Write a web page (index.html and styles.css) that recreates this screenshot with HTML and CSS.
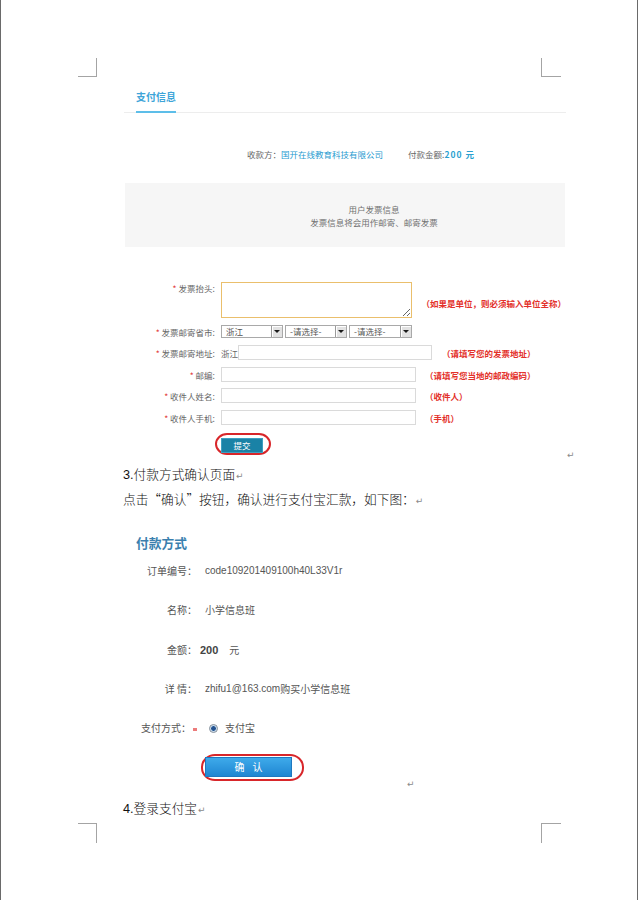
FILE: index.html
```html
<!DOCTYPE html>
<html lang="zh-CN">
<head>
<meta charset="utf-8">
<title>支付信息 - 付款方式</title>
<link rel="stylesheet" href="styles.css">
</head>
<body>
<div class="page">
  <span class="crop tl"></span>
  <span class="crop tr"></span>
  <span class="crop bl"></span>
  <span class="crop br"></span>

  <div class="content">
    <div class="img-para">
      <section class="shot1">
        <div class="tabs"><span class="tab">支付信息</span></div>
        <div class="payee"><span>收款方：</span><span class="company">国开在线教育科技有限公司</span><span class="amount-label">付款金额:</span><span class="amount">200 元</span></div>
        <div class="notice">
          <p>用户发票信息</p>
          <p>发票信息将会用作邮寄、邮寄发票</p>
        </div>
        <form class="invoice">
          <div class="row row-top">
            <label class="lbl"><i class="req">*</i> 发票抬头:</label>
            <textarea class="ta"></textarea>
            <span class="hint hint-top">（如果是单位，则必须输入单位全称）</span>
          </div>
          <div class="row">
            <label class="lbl"><i class="req">*</i> 发票邮寄省市:</label>
            <span class="select"><span class="val">浙江</span><span class="arrow"></span></span>
            <span class="select"><span class="val">-请选择-</span><span class="arrow"></span></span>
            <span class="select wide"><span class="val">-请选择-</span><span class="arrow"></span></span>
          </div>
          <div class="row">
            <label class="lbl"><i class="req">*</i> 发票邮寄地址:</label>
            <span class="prefix">浙江</span><input class="inp addr" type="text">
            <span class="hint hint-addr">（请填写您的发票地址）</span>
          </div>
          <div class="row">
            <label class="lbl"><i class="req">*</i> 邮编:</label>
            <input class="inp" type="text">
            <span class="hint">（请填写您当地的邮政编码）</span>
          </div>
          <div class="row row-tight">
            <label class="lbl"><i class="req">*</i> 收件人姓名:</label>
            <input class="inp" type="text">
            <span class="hint">（收件人）</span>
          </div>
          <div class="row">
            <label class="lbl"><i class="req">*</i> 收件人手机:</label>
            <input class="inp" type="text">
            <span class="hint">（手机）</span>
          </div>
          <div class="row row-submit">
            <span class="oval oval-submit"><button class="btn-submit" type="button">提交</button></span>
          </div>
        </form>
      </section>
      <span class="ret ret-img1">↵</span>
    </div>

    <p class="para"><span class="num">3.</span>付款方式确认页面<span class="ret">↵</span></p>
    <p class="para">点击“确认”按钮，确认进行支付宝汇款，如下图：<span class="ret">↵</span></p>

    <div class="img-para img-para2">
      <section class="shot2">
        <h2 class="pay-title">付款方式</h2>
        <div class="pay-rows">
          <span class="plbl">订单编号：</span><span class="pval latin">code109201409100h40L33V1r</span>
          <span class="plbl">名称：</span><span class="pval">小学信息班</span>
          <span class="plbl">金额：</span><span class="pval"><b class="money">200</b><span class="yuan">元</span></span>
          <span class="plbl">详 情：</span><span class="pval"><span class="latin">zhifu1@163.com</span>购买小学信息班</span>
          <span class="plbl">支付方式：<i class="req-mark"></i></span><span class="pval"><span class="radio"></span><span class="radio-text">支付宝</span></span>
        </div>
        <span class="oval oval-confirm"><button class="btn-confirm" type="button">确 认</button></span>
      </section>
      <span class="ret ret-img2">↵</span>
    </div>

    <p class="para"><span class="num">4.</span>登录支付宝<span class="ret">↵</span></p>
  </div>
</div>
</body>
</html>
```

FILE: styles.css
```css
* {
  box-sizing: border-box;
}

html,
body {
  margin: 0;
  padding: 0;
  background: #fff;
}

body {
  font-family: "Noto Sans CJK SC", "Liberation Sans", sans-serif;
  color: #000;
}

.page {
  position: relative;
  width: 638px;
  height: 900px;
  border-left: 1px solid #6a6a6a;
  border-right: 1px solid #6a6a6a;
  overflow: hidden;
}

/* Word page crop marks */
.crop {
  position: absolute;
  border: 0 solid #a4a4a4;
}

.crop.tl {
  left: 77px;
  top: 58px;
  width: 19px;
  height: 19px;
  border-right-width: 1px;
  border-bottom-width: 1px;
}

.crop.tr {
  left: 540px;
  top: 58px;
  width: 20px;
  height: 19px;
  border-left-width: 1px;
  border-bottom-width: 1px;
}

.crop.bl {
  left: 77px;
  top: 823px;
  width: 19px;
  height: 20px;
  border-right-width: 1px;
  border-top-width: 1px;
}

.crop.br {
  left: 540px;
  top: 823px;
  width: 20px;
  height: 20px;
  border-left-width: 1px;
  border-top-width: 1px;
}

.content {
  padding: 90px 0 0 122px;
}

.img-para {
  display: flex;
  align-items: flex-end;
  margin-bottom: 7px;
}

.img-para2 {
  margin-bottom: 15px;
}

/* ---------- screenshot 1 ---------- */
.shot1 {
  width: 443px;
  font-size: 8.5px;
  color: #666;
}

.tabs {
  display: flex;
  margin-left: 1px;
  border-bottom: 1px solid #ededed;
}

.tab {
  margin-left: 12px;
  font-size: 10px;
  font-weight: bold;
  color: #3ea4d8;
  line-height: 14px;
  padding-bottom: 7px;
  border-bottom: 2px solid #5dbee9;
  margin-bottom: -1px;
}

.payee {
  margin-top: 35px;
  padding-left: 124px;
  line-height: 12px;
  white-space: nowrap;
}

.company {
  color: #1f9bd0;
}

.amount-label {
  margin-left: 25px;
}

.amount {
  color: #2a9fd0;
  font-weight: bold;
  letter-spacing: 1px;
}

.notice {
  margin: 23px 0 0 2px;
  width: 440px;
  height: 64px;
  background: #f6f6f6;
  padding: 20px 0 0 58px;
  text-align: center;
  line-height: 13px;
  color: #707070;
}

.notice p {
  margin: 0;
}

.invoice {
  margin: 35px 0 0;
}

.row {
  display: flex;
  align-items: center;
  margin-top: 7px;
  white-space: nowrap;
}

.row-top {
  margin-top: 0;
  align-items: flex-start;
}

.row-tight {
  margin-top: 6px;
}

.row-submit {
  margin-top: 8px;
}

.lbl {
  width: 92px;
  margin-right: 6px;
  text-align: right;
  line-height: 12px;
  color: #666;
}

.req {
  color: #e23a3a;
  font-style: normal;
}

.ta {
  display: block;
  width: 192px;
  height: 36px;
  margin: 0;
  padding: 0;
  border: 1px solid #eabf6c;
  background: #fff;
  resize: both;
}

.hint {
  margin-left: 9px;
  color: #e3302a;
  font-weight: bold;
  line-height: 12px;
}

.hint-top {
  margin-top: 15px;
}

.hint-addr {
  margin-left: 10px;
}

.select {
  display: flex;
  width: 62px;
  height: 13px;
  margin-right: 2px;
  border: 1px solid #a9a9a9;
  background: #fff;
}

.select.wide {
  width: 63px;
}

.select .val {
  flex: 1;
  padding-left: 4px;
  line-height: 11px;
  color: #555;
}

.select .arrow {
  display: flex;
  align-items: center;
  justify-content: center;
  width: 11px;
  border-left: 1px solid #9a9a9a;
  background: #e2e2e2;
  box-shadow: inset 1px 1px 0 #fff;
}

.select .arrow::after {
  content: "";
  border-left: 3px solid transparent;
  border-right: 3px solid transparent;
  border-top: 3px solid #1a1a1a;
}

.prefix {
  width: 17px;
  line-height: 12px;
  color: #666;
}

.inp {
  display: block;
  width: 195px;
  height: 15px;
  margin: 0;
  padding: 0;
  border: 1px solid #dadada;
  background: #fff;
}

.inp.addr {
  width: 194px;
}

.oval {
  display: flex;
  border: 2px solid #d8262a;
}

.oval-submit {
  margin-left: 92px;
  padding: 3px 6px 0 4px;
  border-radius: 12px / 11px;
}

.btn-submit {
  width: 42px;
  height: 15px;
  margin: 0;
  padding: 0;
  border: 1px solid #3d9fc1;
  background: #1a82a6;
  color: #fff;
  font: 8.5px/13px "Noto Sans CJK SC", sans-serif;
}

/* ---------- Word paragraphs ---------- */
.para {
  margin: 0;
  font-size: 12.7px;
  font-weight: 300;
  line-height: 24px;
  color: #111;
  white-space: nowrap;
}

.num {
  font-family: "Liberation Sans", sans-serif;
  font-weight: 400;
}

.ret {
  font-family: "DejaVu Sans", sans-serif;
  font-size: 9px;
  font-weight: 400;
  line-height: 10px;
  color: #8a8a8a;
  margin-left: 1px;
}

.ret-img1 {
  margin-bottom: -5px;
}

.ret-img2 {
  margin-bottom: -8px;
}

/* ---------- screenshot 2 ---------- */
.shot2 {
  width: 283px;
  padding-top: 22px;
}

.pay-title {
  margin: 0 0 0 13px;
  font-size: 12.75px;
  font-weight: bold;
  line-height: 20px;
  color: #3a7fae;
}

.pay-rows {
  display: grid;
  grid-template-columns: 74px auto;
  column-gap: 8px;
  row-gap: 19.25px;
  grid-auto-rows: 20px;
  margin-top: 8px;
  font-size: 10px;
  line-height: 20px;
  color: #555;
  white-space: pre;
}

.plbl {
  text-align: right;
}

.pval {
  display: flex;
  align-items: center;
}

.latin {
  font-family: "Liberation Sans", sans-serif;
}

.money {
  margin-left: -5px;
  font-family: "Liberation Sans", sans-serif;
  font-size: 11px;
  color: #444;
}

.yuan {
  margin-left: 11px;
}

.req-mark {
  display: inline-block;
  width: 4px;
  height: 3px;
  margin-left: 2px;
  background: #ec7b7b;
  vertical-align: middle;
}

.radio {
  width: 9px;
  height: 9px;
  margin-left: 4px;
  border-radius: 50%;
  border: 1px solid #7f8c99;
  background: radial-gradient(circle, #24528f 0 2px, #9fc0e0 2.5px, #f4f6f8 3.5px);
}

.radio-text {
  margin-left: 7px;
}

.oval-confirm {
  width: fit-content;
  margin: 16px 0 0 78px;
  padding: 1px 10px 2px 2px;
  border-radius: 14px / 13px;
}

.btn-confirm {
  width: 87px;
  height: 20px;
  margin: 0;
  padding: 0;
  border: 1px solid #1f78c0;
  background: linear-gradient(#3eaaea, #1f86d2);
  color: #fff;
  font: 10px/18px "Noto Sans CJK SC", sans-serif;
  word-spacing: 6px;
  white-space: pre;
}
```
